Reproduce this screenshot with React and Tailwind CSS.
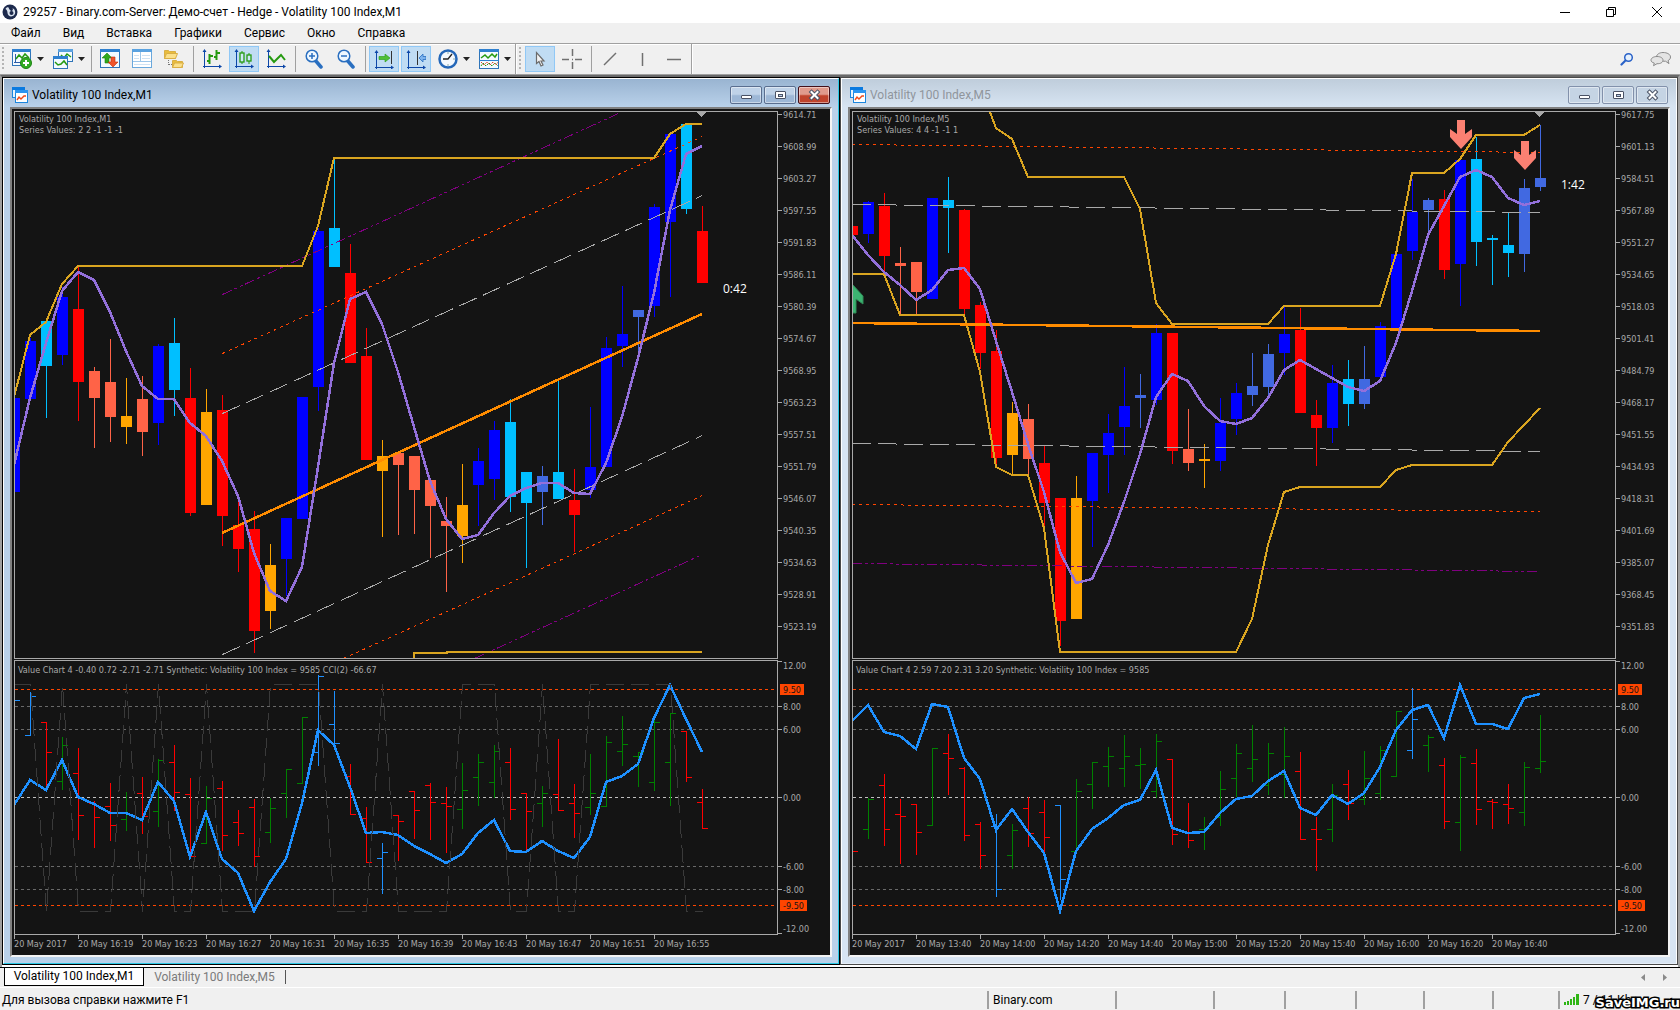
import clsx from "clsx";

const BLUE = "#0000ff";
const SKY = "#00bfff";
const RED = "#ff0000";
const TOMATO = "#ff6347";
const ORANGE = "#ffa500";
const ROYAL = "#4169e1";
const GREEN = "#008000";
const DODGER = "#1e90ff";
const GRAY = "#a9a9a9";
const GOLD = "#daa520";
const BACK = "#141414";

// one bar of the chart every 16px
const STEP = 16;
const barX = (i) => 2 + i * STEP;

// color, high, body top, body bottom, low
const m1Candles = [
  [BLUE, 289, 289, 383, 383],
  [BLUE, 229, 232, 290, 290],
  [SKY, 212, 212, 257, 309],
  [BLUE, 178, 188, 246, 256],
  [RED, 158, 200, 273, 312],
  [TOMATO, 258, 262, 289, 339],
  [TOMATO, 230, 273, 308, 333],
  [ORANGE, 269, 307, 318, 335],
  [TOMATO, 267, 290, 323, 347],
  [BLUE, 235, 237, 314, 336],
  [SKY, 209, 234, 281, 307],
  [RED, 259, 289, 404, 407],
  [ORANGE, 280, 303, 396, 396],
  [RED, 286, 301, 407, 437],
  [RED, 389, 416, 440, 463],
  [RED, 402, 420, 522, 544],
  [ORANGE, 435, 456, 502, 520],
  [BLUE, 409, 409, 450, 487],
  [BLUE, 288, 288, 410, 410],
  [BLUE, 119, 122, 278, 302],
  [SKY, 50, 119, 158, 158],
  [RED, 135, 164, 254, 254],
  [RED, 219, 247, 351, 351],
  [ORANGE, 331, 347, 362, 428],
  [TOMATO, 344, 344, 356, 426],
  [TOMATO, 347, 347, 381, 425],
  [TOMATO, 371, 371, 397, 449],
  [TOMATO, 388, 412, 417, 483],
  [ORANGE, 355, 396, 427, 454],
  [BLUE, 339, 352, 376, 417],
  [BLUE, 312, 321, 370, 391],
  [SKY, 290, 313, 388, 403],
  [SKY, 363, 363, 394, 459],
  [ROYAL, 357, 367, 383, 416],
  [SKY, 271, 363, 390, 390],
  [RED, 360, 391, 406, 443],
  [BLUE, 298, 358, 381, 389],
  [BLUE, 228, 239, 358, 358],
  [BLUE, 177, 225, 237, 258],
  [ROYAL, 201, 201, 208, 244],
  [BLUE, 95, 98, 197, 208],
  [BLUE, 25, 25, 113, 188],
  [SKY, 15, 15, 100, 105],
  [RED, 97, 122, 174, 174],
];

const m5Candles = [
  [RED, 117, 117, 126, 126],
  [BLUE, 92, 93, 125, 134],
  [RED, 84, 97, 147, 162],
  [TOMATO, 138, 154, 157, 206],
  [TOMATO, 153, 153, 183, 206],
  [BLUE, 89, 89, 190, 190],
  [SKY, 68, 91, 99, 144],
  [RED, 100, 101, 200, 206],
  [RED, 193, 196, 244, 260],
  [RED, 221, 242, 349, 356],
  [ORANGE, 293, 304, 346, 365],
  [TOMATO, 295, 310, 350, 366],
  [RED, 337, 354, 394, 417],
  [RED, 389, 389, 512, 537],
  [ORANGE, 367, 389, 510, 510],
  [BLUE, 344, 344, 392, 438],
  [BLUE, 305, 324, 346, 384],
  [BLUE, 258, 297, 318, 346],
  [ROYAL, 265, 286, 289, 319],
  [BLUE, 215, 224, 291, 296],
  [RED, 224, 224, 342, 355],
  [TOMATO, 300, 340, 354, 362],
  [ORANGE, 335, 350, 352, 379],
  [BLUE, 289, 314, 352, 362],
  [BLUE, 274, 284, 310, 326],
  [ROYAL, 244, 277, 286, 297],
  [ROYAL, 235, 245, 278, 286],
  [BLUE, 198, 225, 244, 266],
  [RED, 199, 221, 304, 304],
  [RED, 291, 306, 319, 357],
  [BLUE, 256, 274, 319, 334],
  [SKY, 251, 270, 295, 317],
  [ROYAL, 237, 270, 295, 300],
  [BLUE, 213, 217, 268, 268],
  [BLUE, 145, 145, 221, 221],
  [BLUE, 70, 103, 142, 151],
  [ROYAL, 89, 91, 101, 126],
  [RED, 81, 90, 161, 170],
  [BLUE, 51, 51, 155, 197],
  [SKY, 28, 50, 133, 157],
  [SKY, 126, 129, 131, 176],
  [SKY, 103, 136, 144, 168],
  [ROYAL, 70, 79, 145, 163],
  [ROYAL, 16, 69, 78, 82],
];

// color, open, high, low, close
const m1Bars = [
  [DODGER, 40, 40, 40, 40],
  [DODGER, 75, 32, 75, 36],
  [RED, 62, 62, 128, 92],
  [GREEN, 121, 77, 129, 85],
  [RED, 113, 88, 179, 155],
  [RED, 143, 141, 187, 157],
  [RED, 146, 123, 180, 165],
  [GREEN, 159, 132, 170, 154],
  [RED, 133, 117, 173, 156],
  [GREEN, 151, 99, 166, 100],
  [RED, 102, 85, 150, 132],
  [RED, 134, 118, 196, 196],
  [GREEN, 183, 126, 183, 138],
  [RED, 128, 121, 190, 175],
  [RED, 162, 150, 185, 173],
  [RED, 147, 139, 206, 196],
  [GREEN, 172, 138, 182, 148],
  [GREEN, 133, 109, 157, 109],
  [GREEN, 123, 57, 123, 57],
  [DODGER, 92, 15, 105, 16],
  [DODGER, 64, 31, 83, 83],
  [RED, 116, 104, 154, 154],
  [RED, 158, 147, 202, 202],
  [DODGER, 198, 183, 233, 192],
  [RED, 155, 155, 200, 161],
  [RED, 131, 131, 178, 150],
  [RED, 125, 123, 179, 142],
  [RED, 143, 127, 192, 146],
  [GREEN, 149, 103, 168, 130],
  [GREEN, 117, 94, 145, 102],
  [GREEN, 122, 85, 137, 91],
  [RED, 102, 88, 159, 149],
  [RED, 133, 133, 191, 151],
  [GREEN, 143, 126, 166, 133],
  [RED, 134, 79, 150, 150],
  [RED, 143, 124, 177, 153],
  [GREEN, 147, 94, 154, 133],
  [GREEN, 146, 76, 146, 82],
  [GREEN, 91, 56, 105, 84],
  [GREEN, 96, 92, 126, 92],
  [GREEN, 122, 60, 130, 62],
  [GREEN, 102, 53, 145, 53],
  [RED, 71, 71, 121, 117],
  [RED, 142, 129, 168, 168],
];

const m5Bars = [
  [RED, 191, 191, 191, 191],
  [GREEN, 169, 138, 178, 139],
  [RED, 125, 114, 185, 169],
  [RED, 154, 139, 203, 156],
  [RED, 144, 144, 194, 172],
  [GREEN, 165, 88, 165, 88],
  [RED, 93, 74, 134, 98],
  [RED, 108, 107, 180, 175],
  [RED, 164, 162, 208, 195],
  [DODGER, 166, 154, 236, 229],
  [GREEN, 195, 164, 208, 170],
  [RED, 148, 137, 186, 173],
  [RED, 152, 140, 192, 177],
  [DODGER, 145, 145, 239, 219],
  [GREEN, 191, 119, 191, 131],
  [GREEN, 124, 102, 148, 102],
  [GREEN, 106, 87, 126, 96],
  [GREEN, 108, 75, 126, 96],
  [GREEN, 105, 88, 128, 104],
  [GREEN, 131, 74, 137, 81],
  [RED, 99, 99, 184, 174],
  [RED, 172, 143, 187, 180],
  [GREEN, 169, 157, 189, 168],
  [GREEN, 157, 111, 165, 129],
  [GREEN, 118, 84, 136, 93],
  [GREEN, 108, 65, 121, 99],
  [GREEN, 125, 83, 134, 93],
  [GREEN, 114, 67, 137, 96],
  [RED, 111, 92, 179, 179],
  [RED, 169, 157, 210, 179],
  [GREEN, 169, 124, 181, 135],
  [RED, 124, 110, 159, 143],
  [GREEN, 139, 91, 144, 118],
  [GREEN, 133, 86, 139, 90],
  [GREEN, 116, 51, 116, 51],
  [DODGER, 90, 28, 98, 59],
  [GREEN, 85, 75, 111, 77],
  [RED, 105, 98, 168, 161],
  [GREEN, 162, 95, 190, 97],
  [RED, 103, 89, 164, 149],
  [RED, 141, 139, 168, 142],
  [RED, 144, 124, 163, 148],
  [GREEN, 152, 102, 165, 107],
  [GREEN, 108, 55, 112, 101],
];

const m1Average = [
  356, 289, 234, 182, 163, 171, 203, 242, 277, 290, 290, 314, 327, 352, 387,
  444, 482, 492, 458, 358, 254, 190, 183, 215, 263, 318, 372, 410, 430, 426,
  404, 387, 379, 374, 374, 384, 385, 354, 308, 249, 184, 101, 45, 37,
];

const m5Average = [
  126, 146, 163, 176, 191, 181, 161, 159, 180, 232, 283, 335, 383, 443, 474,
  470, 436, 393, 345, 288, 265, 272, 297, 312, 315, 309, 289, 261, 251, 260,
  269, 278, 282, 272, 234, 182, 126, 97, 68, 61, 68, 89, 96, 92,
];

const m1Synthetic = [
  145, 120, 130, 100, 137, 144, 153, 153, 160, 122, 141, 197, 152, 199, 213,
  251, 222, 199, 143, 70, 85, 127, 173, 172, 175, 186, 194, 203, 194, 173, 160,
  191, 192, 181, 191, 198, 177, 122, 116, 104, 58, 25, 59, 92,
];

const m5Synthetic = [
  61, 45, 72, 76, 89, 44, 47, 98, 119, 170, 149, 172, 193, 251, 191, 169, 158,
  145, 140, 110, 168, 173, 172, 153, 139, 136, 121, 111, 148, 155, 135, 144,
  133, 107, 70, 50, 45, 78, 25, 64, 64, 69, 38, 34,
];

// CCI jumps between its two limits, 1 is the upper one
const m1Cci = "11010001010010001111000100001110010011111100"
  .split("")
  .map((v) => (v === "1" ? 24 : 251));

const DASH = "19 7";
const DOT = "3 4";
const DASH_DOT = "10 3 3 3 3 3";

const charts = [
  {
    symbol: "Volatility 100 Index,M1",
    series: "Series Values: 2 2 -1 -1 -1",
    indicator:
      "Value Chart 4 -0.40 0.72 -2.71 -2.71 Synthetic: Volatility 100 Index = 9585 CCI(2) -66.67",
    active: true,
    candles: m1Candles,
    bars: m1Bars,
    average: m1Average,
    synthetic: m1Synthetic,
    cci: m1Cci,
    topPrice: 9614.71,
    priceStep: 5.72,
    timer: { text: "0:42", x: 711, y: 184 },
    arrows: [],
    bands: [
      "2,288 18,226 34,213 50,175 66,157 290,157 306,117 322,49 642,49 658,25 674,15 690,15",
      "402,550 402,544 435,544 435,543 690,543",
    ],
    channel: [
      { points: "210,304 690,86", color: GRAY, dash: DASH },
      { points: "210,545 690,326", color: GRAY, dash: DASH },
      { points: "210,244 690,27", color: "#ff4500", dash: DOT },
      { points: "331,549 690,386", color: "#ff4500", dash: DOT },
      { points: "210,185 606,4", color: "#800080", dash: DASH_DOT },
      { points: "462,549 690,445", color: "#800080", dash: DASH_DOT },
    ],
    regression: "210,424 690,205",
    times: [
      "2017", "16:19", "16:23", "16:27", "16:31", "16:35", "16:39", "16:43",
      "16:47", "16:51", "16:55",
    ],
  },
  {
    symbol: "Volatility 100 Index,M5",
    series: "Series Values: 4 4 -1 -1 1",
    indicator:
      "Value Chart 4 2.59 7.20 2.31 3.20 Synthetic: Volatility 100 Index = 9585",
    active: false,
    candles: m5Candles,
    bars: m5Bars,
    average: m5Average,
    synthetic: m5Synthetic,
    cci: null,
    topPrice: 9617.75,
    priceStep: 16.62,
    timer: { text: "1:42", x: 711, y: 80 },
    arrows: [
      { x: 611, y: 11, up: false },
      { x: 675, y: 32, up: false },
      { x: 2, y: 175, up: true },
    ],
    bands: [
      "140,3 146,19 162,30 178,68 274,68 290,100 306,194 322,215 418,215 434,197 530,197 546,145 562,64 594,64 610,50 626,26 674,26 690,16",
      "2,165 34,165 50,206 114,206 130,263 146,358 162,366 178,366 194,419 210,543 386,543 402,510 418,436 434,383 450,378 530,378 546,361 562,356 642,356 658,333 674,316 690,299",
    ],
    channel: [
      { points: "2,95 690,103", color: GRAY, dash: DASH },
      { points: "2,334 690,342", color: GRAY, dash: DASH },
      { points: "2,35 690,43", color: "#ff4500", dash: DOT },
      { points: "2,395 690,402", color: "#ff4500", dash: DOT },
      { points: "2,454 690,462", color: "#800080", dash: DASH_DOT },
    ],
    regression: "2,214 690,222",
    times: [
      "2017", "13:40", "14:00", "14:20", "14:40", "15:00", "15:20", "15:40",
      "16:00", "16:20", "16:40",
    ],
  },
];

const levels = [
  { label: "9.50", y: 29, color: "#ff4500", box: 24 },
  { label: "8.00", y: 46, color: "#696969" },
  { label: "6.00", y: 69, color: "#696969" },
  { label: "0.00", y: 137, color: "#c0c0c0" },
  { label: "-6.00", y: 206, color: "#696969" },
  { label: "-8.00", y: 229, color: "#696969" },
  { label: "-9.50", y: 245, color: "#ff4500", box: 27 },
];

const toPoints = (values) => values.map((y, i) => `${barX(i)},${y}`).join(" ");

const CHART_TEXT = "font-['DejaVu_Sans_Condensed','Noto_Sans',sans-serif] text-[9px]";

const SignalArrow = ({ x, y, up }) => (
  <polygon
    transform={
      up ? `translate(${x} ${y + 29}) scale(1 -1)` : `translate(${x} ${y})`
    }
    points="-4,0 4,0 4,14 11,9 11,17 0,29 -11,17 -11,9 -4,14"
    fill={up ? "#3cb371" : "#fa8072"}
    stroke={up ? "#2e8b57" : "none"}
  />
);

const PricePlot = ({ chart }) => (
  <svg className="block w-full h-[548px] border border-[#a9a9a9] overflow-hidden">
    <g transform="translate(-3 -3)" shapeRendering="crispEdges" fill="none">
      {chart.candles.map(([color, high, top, bottom, low], i) => (
        <g key={i} fill={color}>
          <rect x={barX(i)} y={high} width="1" height={low - high} />
          <rect x={barX(i) - 5} y={top} width="11" height={bottom - top} />
        </g>
      ))}
      {chart.channel.map((line) => (
        <polyline
          key={line.points}
          points={line.points}
          stroke={line.color}
          strokeDasharray={line.dash}
          transform="translate(0.5 0.5)"
        />
      ))}
      {chart.bands.map((points) => (
        <polyline key={points} points={points} stroke={GOLD} strokeWidth="2" />
      ))}
      <polyline points={chart.regression} stroke="#ff8c00" strokeWidth="2.5" />
      <polyline
        points={toPoints(chart.average)}
        stroke="#9370db"
        strokeWidth="2.5"
      />
      <polygon points="684,3 694,3 689,8" fill={GRAY} />
    </g>
    <g transform="translate(-3 -3)">
      {chart.arrows.map((arrow) => (
        <SignalArrow key={arrow.x} {...arrow} />
      ))}
      <g fill={GRAY} className={CHART_TEXT}>
        <text x="7" y="13">
          {chart.symbol}
        </text>
        <text x="7" y="24">
          {chart.series}
        </text>
      </g>
      <text
        x={chart.timer.x}
        y={chart.timer.y}
        fill="#fff"
        className="font-['Open_Sans',sans-serif] text-[12px]"
      >
        {chart.timer.text}
      </text>
    </g>
  </svg>
);

const PriceAxis = ({ chart }) => (
  <svg className={clsx("block w-[52px] h-[551px] shrink-0", CHART_TEXT)}>
    {Array.from({ length: 17 }, (_, i) => (
      <g key={i} fill={GRAY}>
        <rect x="0" y={5 + i * 32} width="4" height="1" />
        <text x="5" y={9 + i * 32}>
          {(chart.topPrice - i * chart.priceStep).toFixed(2)}
        </text>
      </g>
    ))}
  </svg>
);

const IndicatorPlot = ({ chart }) => (
  <svg className="block w-full h-[275px] border border-[#a9a9a9] overflow-hidden">
    <g transform="translate(0 -1)" shapeRendering="crispEdges">
      {levels.map((level) => (
        <line
          key={level.label}
          x1="0"
          x2="100%"
          y1={level.y + 0.5}
          y2={level.y + 0.5}
          stroke={level.color}
          strokeDasharray="3 3"
        />
      ))}
    </g>
    <g transform="translate(-3 -1)" shapeRendering="crispEdges" fill="none">
      {chart.bars.map(([color, open, high, low, close], i) => (
        <g key={i} fill={color}>
          <rect x={barX(i)} y={high} width="1" height={low - high + 1} />
          <rect x={barX(i) - 5} y={open} width="5" height="1" />
          <rect x={barX(i) + 1} y={close} width="5" height="1" />
        </g>
      ))}
      <polyline
        points={toPoints(chart.synthetic)}
        stroke={DODGER}
        strokeWidth="2.5"
      />
      {chart.cci && (
        <polyline
          points={toPoints(chart.cci)}
          stroke="#3a3a3a"
          strokeDasharray="18 7"
          transform="translate(0.5 0.5)"
        />
      )}
    </g>
    <text x="3" y="12" fill={GRAY} className={CHART_TEXT}>
      {chart.indicator}
    </text>
  </svg>
);

const IndicatorAxis = () => (
  <svg className={clsx("block w-[52px] h-[275px] shrink-0", CHART_TEXT)}>
    <g fill={GRAY}>
      <rect x="0" y="1" width="4" height="1" />
      <text x="5" y="9">
        12.00
      </text>
      <rect x="0" y="273" width="4" height="1" />
      <text x="5" y="272">
        -12.00
      </text>
    </g>
    {levels.map((level) => (
      <g key={level.label}>
        {level.box ? (
          <rect
            x="2"
            y={level.y - 5}
            width={level.box}
            height="11"
            fill="#ff4500"
          />
        ) : (
          <rect x="0" y={level.y} width="4" height="1" fill={GRAY} />
        )}
        <text x="5" y={level.y + 4} fill={level.box ? BACK : GRAY}>
          {level.label}
        </text>
      </g>
    ))}
  </svg>
);

const TimeAxis = ({ times }) => (
  <svg className={clsx("block w-full h-5", CHART_TEXT)} fill={GRAY}>
    {times.map((time, i) => (
      <g key={time}>
        <rect x={barX(i * 4)} y="0" width="1" height="4" />
        <text x={barX(i * 4)} y="12">
          20 May {time}
        </text>
      </g>
    ))}
  </svg>
);

const WindowIcon = () => (
  <svg viewBox="0 0 16 16" className="size-4">
    <rect x="0.5" y="0.5" width="12" height="10" fill="#e8f3fc" stroke="#1c86dd" />
    <rect x="0" y="0" width="13" height="3" fill="#0a7ae0" />
    <rect x="3.5" y="3.5" width="12" height="12" fill="#fff" stroke="#1c86dd" />
    <rect x="3" y="3" width="13" height="3" fill="#2b95f0" />
    <path d="M5 13l2-3 2 2 3-3 2 0" fill="none" stroke="#f04a18" strokeWidth="1.4" />
  </svg>
);

const windowGlyphs = {
  Minimize: (
    <rect x="10.5" y="8.5" width="10" height="3" rx="0.5" fill="#fff" stroke="#4a5265" />
  ),
  Maximize: (
    <g stroke="#4a5265">
      <rect x="10.5" y="4.5" width="10" height="7" rx="0.5" fill="#fff" />
      <rect x="13.5" y="7.5" width="4" height="2" fill="#b9cde6" />
    </g>
  ),
  Close: (
    <g fill="none" strokeLinecap="square">
      <path d="M12.5 5l6 6M18.5 5l-6 6" stroke="#4a5265" strokeWidth="4" />
      <path d="M12.5 5l6 6M18.5 5l-6 6" stroke="#fff" strokeWidth="2" />
    </g>
  ),
};

const WindowButton = ({ name, active }) => (
  <button
    type="button"
    aria-label={name}
    className={clsx(
      "w-8 h-[18px] rounded-xs border flex items-center justify-center shadow-[inset_0_0_0_1px_rgba(255,255,255,0.45)]",
      !active && "border-[#8291ab] bg-[#c5d4e4]",
      active &&
        name !== "Close" &&
        "border-[#5a6e8f] bg-linear-to-b from-[#bfd2e8] from-45% to-[#9db7d6] to-55%",
      active &&
        name === "Close" &&
        "border-[#43101a] bg-linear-to-b from-[#e09a8c] from-45% to-[#c0432c] to-55%"
    )}
  >
    <svg viewBox="0 0 31 16" className="w-[31px] h-4 shrink-0">
      {windowGlyphs[name]}
    </svg>
  </button>
);

const ChartWindow = ({ chart }) => {
  const { active } = chart;
  return (
    <section
      className={clsx(
        "flex-1 min-w-0 border",
        active ? "border-black" : "border-[#4a4a4a]"
      )}
    >
      <div
        className={clsx(
          "border border-t-white border-l-white px-[6px] pb-[6px]",
          active
            ? "border-r-[#2bc8e4] border-b-[#2bc8e4] bg-[#b9d1ea]"
            : "border-r-white border-b-[#e6eef7] bg-[#d7e4f2]"
        )}
      >
        <header
          className={clsx(
            "h-7 -mx-[6px] px-2 pt-1 flex items-center bg-linear-to-b",
            active
              ? "from-[#99b4d1] to-[#b9d1ea]"
              : "from-[#bfcddb] to-[#d7e4f2]"
          )}
        >
          <WindowIcon />
          <h2
            className={clsx(
              "ml-1 flex-1 text-[12px]",
              active ? "text-black" : "text-[#8f959c]"
            )}
          >
            {chart.symbol}
          </h2>
          <div className="flex gap-[2px]">
            <WindowButton name="Minimize" active={active} />
            <WindowButton name="Maximize" active={active} />
            <WindowButton name="Close" active={active} />
          </div>
        </header>
        <div className="border-2 border-t-[#808080] border-l-[#808080] border-r-[#f4f4f4] border-b-[#f4f4f4] bg-[#141414]">
          <div className="flex">
            <div className="flex-1 min-w-0 pl-[2px] pt-[2px]">
              <PricePlot chart={chart} />
            </div>
            <PriceAxis chart={chart} />
          </div>
          <div className="flex">
            <div className="flex-1 min-w-0 pl-[2px]">
              <IndicatorPlot chart={chart} />
            </div>
            <IndicatorAxis />
          </div>
          <TimeAxis times={chart.times} />
        </div>
      </div>
    </section>
  );
};

const icons = {
  newChart: (
    <>
      <rect x="0.5" y="0.5" width="18" height="16" fill="#f4faff" stroke="#2f74b8" />
      <rect x="0" y="0" width="19" height="3" fill="#2f80cf" />
      <path d="M3.5 5v9M2 13.5h12" stroke="#2f5fa8" fill="none" />
      <path d="M4 10l3-4 3 3 3-4 4 4" stroke="#259a10" strokeWidth="1.5" fill="none" />
      <circle cx="14" cy="14" r="5.5" fill="#32ab22" stroke="#1d8412" />
      <path d="M14 11v6M11 14h6" stroke="#fff" strokeWidth="2" />
    </>
  ),
  profiles: (
    <>
      <rect x="5.5" y="0.5" width="14" height="12" fill="#f4faff" stroke="#2f74b8" />
      <rect x="5" y="0" width="15" height="3" fill="#5aa2e0" />
      <path d="M8 6l3 3 3-4 4 3" stroke="#259a10" strokeWidth="1.5" fill="none" />
      <rect x="0.5" y="7.5" width="14" height="12" fill="#f4faff" stroke="#2f74b8" />
      <rect x="0" y="7" width="15" height="3" fill="#2f80cf" />
      <path d="M2 13l3 3 3-1 3-3 3 4" stroke="#259a10" strokeWidth="1.5" fill="none" />
    </>
  ),
  market: (
    <>
      <rect x="0.5" y="0.5" width="19" height="18" fill="#f4faff" stroke="#2f74b8" />
      <rect x="0" y="0" width="20" height="3" fill="#2f80cf" />
      <path d="M7 4l5 5H9v5H5V9H2z" fill="#2fa81c" stroke="#1d8412" strokeWidth="0.6" />
      <path d="M13 18l-5-5h3V8h4v5h3z" fill="#f0552c" stroke="#c22f0c" strokeWidth="0.6" />
    </>
  ),
  dataWindow: (
    <>
      <rect x="0.5" y="0.5" width="19" height="18" fill="#fff" stroke="#6aa8dc" />
      <rect x="0" y="0" width="20" height="3" fill="#5aa2e0" />
      <path d="M1 12.5h18M8.5 3v9" stroke="#9cc6ea" fill="none" />
      <path d="M2 6.5h5M2 9.5h5M10 6.5h8M10 9.5h8M2 15.5h16" stroke="#cfe2f3" fill="none" />
    </>
  ),
  navigator: (
    <>
      <path d="M0.5 1.5h4l1 1h6v7h-11z" fill="#e9bd3c" stroke="#d9ae45" />
      <path d="M2.5 4.5h11l-2 5h-11z" fill="#fbe08a" stroke="#d9ae45" />
      <path d="M4.5 11v6M5 15.5h3" stroke="#777" strokeDasharray="1 1" fill="none" />
      <path d="M8.5 11.5h4l1 1h5v6h-10z" fill="#e9bd3c" stroke="#d9ae45" />
      <path d="M10.500 14h9l-2 4.500h-9z" fill="#fbe08a" stroke="#d9ae45" />
    </>
  ),
  barChart: (
    <>
      <path d="M2.5 1v18M1 17.5h17" stroke="#0d47a8" fill="none" />
      <path d="M2.5 0l2 3h-4zM20 17.5l-3-2v4z" fill="#0d47a8" />
      <path d="M7.5 5v10M5 12h2M8 7h3M14.5 1v10M12 8h2M15 4h3" stroke="#259a10" strokeWidth="2" fill="none" />
    </>
  ),
  candles: (
    <>
      <path d="M2.5 1v18M1 17.5h17" stroke="#0d47a8" fill="none" />
      <path d="M2.5 0l2 3h-4zM20 17.5l-3-2v4z" fill="#0d47a8" />
      <path d="M8 2v13M15 4v11" stroke="#259a10" fill="none" />
      <rect x="6" y="4" width="4" height="9" fill="#cfe8fb" stroke="#259a10" strokeWidth="1.3" />
      <rect x="13" y="6" width="4" height="6" fill="#cfe8fb" stroke="#259a10" strokeWidth="1.3" />
    </>
  ),
  lineChart: (
    <>
      <path d="M2.5 1v18M1 17.5h17" stroke="#0d47a8" fill="none" />
      <path d="M2.5 0l2 3h-4zM20 17.5l-3-2v4z" fill="#0d47a8" />
      <path d="M3 7l5 6 7-7 4 5" stroke="#259a10" strokeWidth="2" fill="none" />
    </>
  ),
  zoomIn: (
    <>
      <path d="M11 11l6 7" stroke="#2a6fc0" strokeWidth="3.5" strokeLinecap="round" />
      <circle cx="8" cy="7" r="5.8" fill="#eef7ff" stroke="#2a6fc0" strokeWidth="1.5" />
      <path d="M8 4v6M5 7h6" stroke="#2a6fc0" strokeWidth="1.5" />
    </>
  ),
  zoomOut: (
    <>
      <path d="M11 11l6 7" stroke="#2a6fc0" strokeWidth="3.5" strokeLinecap="round" />
      <circle cx="8" cy="7" r="5.8" fill="#eef7ff" stroke="#2a6fc0" strokeWidth="1.5" />
      <path d="M5 7h6" stroke="#2a6fc0" strokeWidth="1.5" />
    </>
  ),
  autoScroll: (
    <>
      <path d="M2.5 2v18M1 18.5h17" stroke="#0d47a8" fill="none" />
      <path d="M2.5 1l2 3h-4zM20 18.5l-3-2v4z" fill="#0d47a8" />
      <path d="M17.5 2v13" stroke="#333" />
      <path d="M5 7.500h6V5l5 4-5 4v-2.500H5z" fill="#4fbf38" stroke="#259a10" strokeWidth="0.6" />
    </>
  ),
  chartShift: (
    <>
      <path d="M2.5 2v18M1 18.5h17" stroke="#0d47a8" fill="none" />
      <path d="M2.5 1l2 3h-4zM20 18.5l-3-2v4z" fill="#0d47a8" />
      <path d="M11.5 2v14" stroke="#333" />
      <path d="M20 7.5h-3V5l-4 4 4 4v-2.5h3z" fill="#7db4ee" stroke="#2a6fc0" strokeWidth="0.8" />
    </>
  ),
  periods: (
    <>
      <circle cx="10" cy="10" r="8.5" fill="#f3f8fd" stroke="#2467b8" strokeWidth="2.5" />
      <path d="M5 10h5l4-5" stroke="#222" strokeWidth="1.3" fill="none" />
      <path d="M10 3v2M10 15v2M15 10h2" stroke="#8aa" />
    </>
  ),
  templates: (
    <>
      <rect x="0.5" y="0.5" width="19" height="19" fill="#f4faff" stroke="#2f74b8" />
      <rect x="0" y="0" width="20" height="3" fill="#2f80cf" />
      <path d="M0 11.5h20" stroke="#2f80cf" />
      <path d="M2 9l4-3 3 3 4-4 3 3 2-3" stroke="#259a10" strokeWidth="1.5" fill="none" />
      <path d="M2 17l2-3 3 3 3-3 3 3 3-3 3 3" stroke="#259a10" strokeDasharray="2 1" fill="none" />
      <path d="M2 13l3 3 3-3 3 3 3-3 3 3 2-3" stroke="#e0492a" strokeDasharray="2 1" fill="none" />
    </>
  ),
  cursor: (
    <path
      d="M6.5 3.5v11l2.5-2 2 4.500 2-1-2-4h3z"
      fill="#f4f4f4"
      stroke="#6b6b6b"
      strokeWidth="1.2"
    />
  ),
  crosshair: (
    <path
      d="M10.5 0v7M10.5 13v7M0 10.5h7M13 10.5h7M10 10.5h1"
      stroke="#707070"
      strokeWidth="1.5"
    />
  ),
  trendLine: <path d="M4 16L16 4" stroke="#707070" strokeWidth="1.5" />,
  verticalLine: <path d="M10.5 4v13" stroke="#707070" strokeWidth="1.5" />,
  horizontalLine: <path d="M3 10.5h14" stroke="#707070" strokeWidth="1.5" />,
};

const Caret = () => (
  <svg viewBox="0 0 7 4" className="w-[7px] h-1">
    <path d="M0 0h7L3.5 4z" fill="#222" />
  </svg>
);

const ToolButton = ({ icon, label, split, pressed }) => (
  <button
    type="button"
    aria-label={label}
    aria-pressed={pressed}
    className={clsx(
      "h-[26px] flex items-center gap-[5px] border pl-1",
      split ? "w-[41px]" : "w-[30px] mr-[2px]",
      pressed ? "bg-[#c0dcf3] border-[#90c8f6]" : "border-transparent"
    )}
  >
    <svg viewBox="0 0 20 20" className="size-5 shrink-0">
      {icons[icon]}
    </svg>
    {split && <Caret />}
  </button>
);

const Separator = () => (
  <span className="w-px h-[26px] ml-[2px] mr-[3px] bg-[#a0a0a0]" />
);

const Grip = () => (
  <span className="w-[2px] h-6 mx-[2px] bg-[repeating-linear-gradient(to_bottom,#b4b4b4_0_2px,transparent_2px_4px)]" />
);

const Toolbar = () => (
  <div className="h-8 flex items-center border-y border-[#a0a0a0] bg-[#f0f0f0] shadow-[inset_0_1px_0_#fff]">
    <Grip />
    <span className="w-px" />
    <ToolButton icon="newChart" label="Новый график" split />
    <ToolButton icon="profiles" label="Профили" split />
    <Separator />
    <ToolButton icon="market" label="Обзор рынка" />
    <ToolButton icon="dataWindow" label="Окно данных" />
    <ToolButton icon="navigator" label="Навигатор" />
    <Separator />
    <ToolButton icon="barChart" label="Бары" />
    <ToolButton icon="candles" label="Свечи" pressed />
    <ToolButton icon="lineChart" label="Линия" />
    <Separator />
    <ToolButton icon="zoomIn" label="Увеличить" />
    <ToolButton icon="zoomOut" label="Уменьшить" />
    <Separator />
    <ToolButton icon="autoScroll" label="Автопрокрутка" pressed />
    <ToolButton icon="chartShift" label="Сдвиг графика" pressed />
    <ToolButton icon="periods" label="Периоды" split />
    <ToolButton icon="templates" label="Шаблоны" split />
    <span className="w-[2px] h-[30px] bg-[#a0a0a0] border-r border-white" />
    <Grip />
    <span className="w-[2px]" />
    <ToolButton icon="cursor" label="Курсор" pressed />
    <ToolButton icon="crosshair" label="Перекрестие" />
    <Separator />
    <ToolButton icon="trendLine" label="Трендовая линия" />
    <ToolButton icon="verticalLine" label="Вертикальная линия" />
    <ToolButton icon="horizontalLine" label="Горизонтальная линия" />
    <span className="w-[2px] h-[30px] bg-[#a0a0a0] border-r border-white" />
    <div className="ml-auto flex items-center gap-4 pr-2">
      <button type="button" aria-label="Поиск">
        <svg viewBox="0 0 14 14" className="size-[14px]">
          <circle cx="8.5" cy="5.5" r="3.8" fill="#e6f1fc" stroke="#2a62c8" strokeWidth="1.5" />
          <path d="M5.5 8.5L1.5 12.5" stroke="#2a62c8" strokeWidth="2.2" strokeLinecap="round" />
        </svg>
      </button>
      <button type="button" aria-label="Чат">
        <svg viewBox="0 0 22 16" className="w-[22px] h-4" fill="#e4e4e4" stroke="#8a8a8a">
          <path d="M13 1.5c4 0 7.5 1.8 7.5 4.5 0 1.6-1 3-2.5 3.6l1 3-3.5-2.4c-5 .4-9-1.2-9-4.2 0-2.7 3-4.5 6.5-4.5z" />
          <path d="M7 5.5c3.5 0 6 1.5 6 3.7s-2.6 3.7-6 3.5l-3.5 2 .8-2.6C2 11.400 1 10.5 1 9.2c0-2.2 2.7-3.7 6-3.7z" />
        </svg>
      </button>
    </div>
  </div>
);

const menu = ["Файл", "Вид", "Вставка", "Графики", "Сервис", "Окно", "Справка"];

const TitleBar = () => (
  <header className="h-[23px] flex items-center bg-white">
    <svg viewBox="0 0 16 16" className="size-4 ml-[2px]">
      <circle cx="8" cy="8" r="7.5" fill="#1d2a4d" />
      <path d="M3.5 5c1.5 1 2 2 2 4 .4 2.5 2.3 3.7 4.5 3.3 2-.4 3.3-2 3.2-4.3-.1-2-1.2-3.3-2.7-3.8.6 1.2.5 2-.3 2.6C9 7.5 7.5 6 6.5 3.5 5.5 3 4 3.8 3.5 5z" fill="#d9e2ef" />
      <circle cx="9.5" cy="9" r="2" fill="#1d2a4d" />
    </svg>
    <h1 className="ml-[5px] flex-1 text-[12px]">
      29257 - Binary.com-Server: Демо-счет - Hedge - Volatility 100 Index,M1
    </h1>
    <button type="button" aria-label="Свернуть" className="w-[46px] flex justify-center">
      <svg viewBox="0 0 10 10" className="size-[10px]" stroke="#000">
        <path d="M0 5.5h10" />
      </svg>
    </button>
    <button type="button" aria-label="Развернуть" className="w-[46px] flex justify-center">
      <svg viewBox="0 0 10 10" className="size-[10px]" stroke="#000" fill="none">
        <path d="M0.5 2.5h7v7h-7zM2.5 2.5v-2h7v7h-2" />
      </svg>
    </button>
    <button type="button" aria-label="Закрыть" className="w-[46px] flex justify-center">
      <svg viewBox="0 0 10 10" className="size-[10px]" stroke="#000">
        <path d="M0 0l10 10M10 0L0 10" />
      </svg>
    </button>
  </header>
);

const ChartTabs = () => (
  <nav className="h-5 flex items-start border-t border-black bg-[#f0f0f0] pl-1 leading-[17px]">
    <button type="button" className="h-[18px] w-[140px] border border-t-0 border-black bg-white text-black">
      Volatility 100 Index,M1
    </button>
    <button type="button" className="h-[18px] w-[141px] text-[#7a7a7a]">
      Volatility 100 Index,M5
    </button>
    <span className="w-px h-[14px] mt-[2px] bg-[#555]" />
    <div className="ml-auto flex items-center gap-[18px] h-[18px] pr-[13px]">
      <button type="button" aria-label="Назад">
        <svg viewBox="0 0 4 7" className="w-1 h-[7px]">
          <path d="M4 0v7L0 3.5z" fill="#8a8a8a" />
        </svg>
      </button>
      <button type="button" aria-label="Вперед">
        <svg viewBox="0 0 4 7" className="w-1 h-[7px]">
          <path d="M0 0v7l4-3.5z" fill="#8a8a8a" />
        </svg>
      </button>
    </div>
  </nav>
);

const CELL = "h-[18px] border-l-2 border-[#a0a0a0] pl-1 flex items-center";

const StatusBar = () => (
  <footer className="relative h-[23px] flex items-center bg-[#f0f0f0] border-t border-white pt-px">
    <p className="flex-1 pl-[2px]">Для вызова справки нажмите F1</p>
    <div className={clsx(CELL, "w-32")}>Binary.com</div>
    <div className={clsx(CELL, "w-[98px]")} />
    <div className={clsx(CELL, "w-[71px]")} />
    <div className={clsx(CELL, "w-[71px]")} />
    <div className={clsx(CELL, "w-[68px]")} />
    <div className={clsx(CELL, "w-[69px]")} />
    <div className={clsx(CELL, "w-[66px]")} />
    <div className={clsx(CELL, "w-[122px] gap-1")}>
      <svg viewBox="0 0 15 11" className="w-[15px] h-[11px]" fill="#2fb515">
        <rect x="0" y="8" width="2" height="3" />
        <rect x="3" y="7" width="2" height="4" />
        <rect x="6" y="5" width="2" height="6" />
        <rect x="9" y="3" width="2" height="8" />
        <rect x="12" y="0" width="3" height="11" />
      </svg>
      <span>7 / 11 Kb</span>
    </div>
    <span className="absolute right-0 bottom-0 font-['DejaVu_Sans',sans-serif] font-bold text-[13px] leading-[14px] text-white [-webkit-text-stroke:3px_#000] [paint-order:stroke_fill]">
      SaveIMG.ru
    </span>
  </footer>
);

export default function App() {
  return (
    <div className="min-h-screen flex flex-col bg-[#f0f0f0] font-['Roboto','Noto_Sans',sans-serif] text-[12px] text-black">
      <TitleBar />
      <nav className="h-5 flex items-center pl-[11px] gap-[22px]">
        {menu.map((item) => (
          <button key={item} type="button">
            {item}
          </button>
        ))}
      </nav>
      <Toolbar />
      <main className="flex items-start border-t-2 border-[#696969] border-x-2 border-x-[#a0a0a0] bg-white pb-[2px]">
        {charts.map((chart) => (
          <ChartWindow key={chart.symbol} chart={chart} />
        ))}
      </main>
      <ChartTabs />
      <StatusBar />
    </div>
  );
}
